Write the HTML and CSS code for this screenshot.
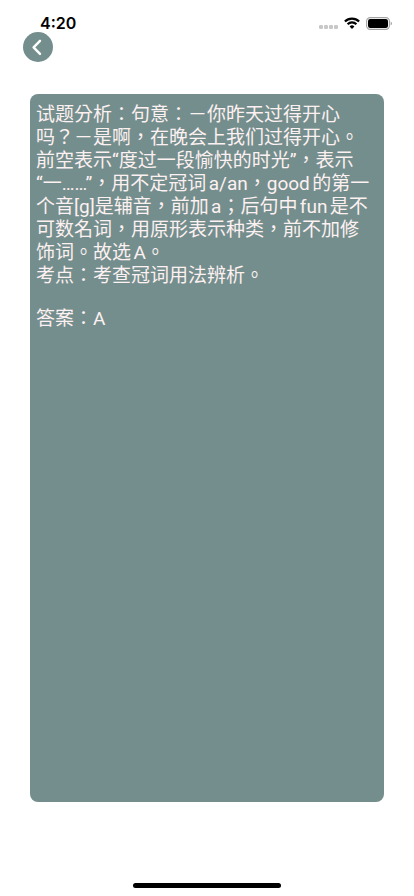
FILE: index.html
```html
<!DOCTYPE html>
<html lang="zh-Hant">
<head>
  <meta charset="utf-8">
  <meta name="viewport" content="width=device-width, initial-scale=1">
  <title>答案</title>
  <link rel="stylesheet" href="styles.css">
</head>
<body>
  <header class="status">
    <time class="clock">4:20</time>
    <div class="indicators">
      <svg class="signal" width="19" height="4" viewBox="0 0 19 4" aria-hidden="true">
        <g fill="#c8c8c8"><rect x="0" y="0" width="4" height="4" rx="1.2"/><rect x="5" y="0" width="4" height="4" rx="1.2"/><rect x="10" y="0" width="4" height="4" rx="1.2"/><rect x="15" y="0" width="4" height="4" rx="1.2"/></g>
      </svg>
      <svg width="16" height="12" viewBox="0 0 16 12" aria-hidden="true">
        <g fill="none" stroke="#000" stroke-width="2.2">
          <path d="M.9 4.5a10 10 0 0 1 14.2 0"/>
          <path d="M3.6 7.3a6.2 6.2 0 0 1 8.8 0"/>
        </g>
        <path d="M8 12 5.6 9.5a3.4 3.4 0 0 1 4.8 0z"/>
      </svg>
      <svg width="27" height="13" viewBox="0 0 27 13" aria-hidden="true">
        <rect x=".6" y=".6" width="22.8" height="11.8" rx="3.6" fill="none" stroke="#a3a3a3" stroke-width="1.1"/>
        <rect x="2" y="2" width="20" height="9" rx="2.2"/>
        <path d="M24.6 4.4a2.3 2.3 0 0 1 0 4.2z" fill="#a3a3a3"/>
      </svg>
    </div>
  </header>
  <nav class="toolbar">
    <button class="back" type="button" aria-label="返回">
      <svg width="30" height="30" viewBox="0 0 30 30" aria-hidden="true">
        <path d="M17 8.8 10.6 15.3l6.4 6.6" fill="none" stroke="#fff" stroke-width="2.4" stroke-linecap="round" stroke-linejoin="round"/>
      </svg>
    </button>
  </nav>
  <main class="card">
    <p>试题分析：句意：－你昨天过得开心<br>吗？－是啊，在晚会上我们过得开心。<br>前空表示“度过一段愉快的时光”，表示<br>“一……”，用不定冠词a/an，good的第一<br>个音[g]是辅音，前加a；后句中fun是不<br>可数名词，用原形表示种类，前不加修<br>饰词。故选A。</p>
    <p>考点：考查冠词用法辨析。</p>
    <p class="answer">答案：A</p>
  </main>
  <footer class="home"><div class="home-bar"></div></footer>
</body>
</html>
```
FILE: styles.css
```css
* {
  box-sizing: border-box;
}

body {
  margin: 0;
  min-height: 100vh;
  display: flex;
  flex-direction: column;
  background: #fff;
  font-family: Inter, "Noto Sans CJK TC", sans-serif;
}

.status {
  display: flex;
  justify-content: space-between;
  align-items: center;
  padding: 14px 21px 0 40px;
  height: 32px;
}

.clock {
  font-size: 16px;
  line-height: 18px;
  font-weight: 600;
}

.indicators {
  display: flex;
  align-items: center;
  gap: 6px;
}

.signal {
  margin-top: 8px;
}

.toolbar {
  display: flex;
  padding: 0 23px;
}

.back {
  display: flex;
  padding: 0;
  border: 0;
  border-radius: 50%;
  background: #748e8d;
}

.card {
  flex: 1;
  margin: 32px 30px 0;
  padding: 9px 6px;
  border-radius: 8px;
  background: #748e8d;
  color: #fdf1f1;
  font-family: Roboto, "Noto Sans CJK TC", sans-serif;
  font-size: 19px;
  line-height: 23px;
  text-autospace: normal;
  text-spacing-trim: space-all;
}

.card p {
  margin: 0;
}

.card .answer {
  margin-top: 20px;
}

.home {
  display: flex;
  justify-content: center;
  align-items: flex-end;
  height: 94px;
  padding-bottom: 8px;
}

.home-bar {
  width: 148px;
  height: 5px;
  border-radius: 3px;
  background: #000;
}
```
